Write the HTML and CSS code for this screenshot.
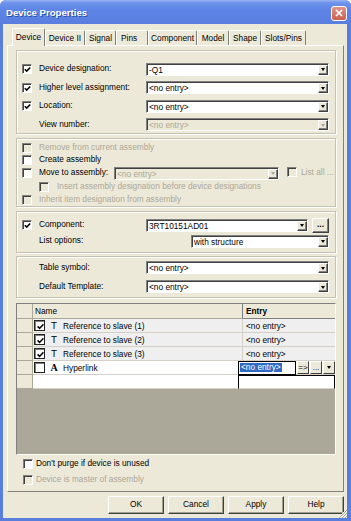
FILE: index.html
```html
<!DOCTYPE html>
<html lang="en">
<head>
    <meta charset="UTF-8">
    <meta name="viewport" content="width=device-width, initial-scale=1.0">
    <title>Device Properties</title>
    <link rel="stylesheet" href="styles.css">
</head>
<body>

    <div class="window">
        <div class="titlebar">
            <span class="title">Device Properties</span>
            <span class="close">
                <svg width="8" height="8" viewBox="0 0 8 8"><path d="M1 1L7 7M7 1L1 7" stroke="#fff" stroke-width="1.7"/></svg>
            </span>
        </div>

        <div class="client">
            <div class="tabs">
                <div class="tab active">Device</div>
                <div class="tab">Device II</div>
                <div class="tab">Signal</div>
                <div class="tab tab-pins">Pins</div>
                <div class="tab">Component</div>
                <div class="tab">Model</div>
                <div class="tab">Shape</div>
                <div class="tab">Slots/Pins</div>
            </div>

            <div class="panel">

                <div class="group g-desig">
                    <div class="row">
                        <span class="cb-cell"><span class="cb"><svg width="7" height="7" viewBox="0 0 7 7"><path d="M0.8 3.2L2.7 5.1L6.2 1.4" fill="none" stroke="#000" stroke-width="1.5"/></svg></span></span>
                        <span class="label">Device designation:</span>
                        <span class="combo"><span class="val">-Q1</span><span class="arrow"></span></span>
                    </div>
                    <div class="row">
                        <span class="cb-cell"><span class="cb"><svg width="7" height="7" viewBox="0 0 7 7"><path d="M0.8 3.2L2.7 5.1L6.2 1.4" fill="none" stroke="#000" stroke-width="1.5"/></svg></span></span>
                        <span class="label">Higher level assignment:</span>
                        <span class="combo"><span class="val">&lt;no entry&gt;</span><span class="arrow"></span></span>
                    </div>
                    <div class="row">
                        <span class="cb-cell"><span class="cb"><svg width="7" height="7" viewBox="0 0 7 7"><path d="M0.8 3.2L2.7 5.1L6.2 1.4" fill="none" stroke="#000" stroke-width="1.5"/></svg></span></span>
                        <span class="label">Location:</span>
                        <span class="combo"><span class="val">&lt;no entry&gt;</span><span class="arrow"></span></span>
                    </div>
                    <div class="row">
                        <span class="cb-cell"></span>
                        <span class="label">View number:</span>
                        <span class="combo disabled"><span class="val">&lt;no entry&gt;</span><span class="arrow"></span></span>
                    </div>
                </div>

                <div class="group g-assembly">
                    <div class="row r12 off">
                        <span class="cb-cell"><span class="cb"></span></span>
                        <span class="label">Remove from current assembly</span>
                    </div>
                    <div class="row r12">
                        <span class="cb-cell"><span class="cb"></span></span>
                        <span class="label">Create assembly</span>
                    </div>
                    <div class="row r14">
                        <span class="cb-cell"><span class="cb"></span></span>
                        <span class="label move-label">Move to assembly:</span>
                        <span class="combo disabled move-combo"><span class="val">&lt;no entry&gt;</span><span class="arrow"></span></span>
                        <span class="list-all off"><span class="cb"></span><span>List all ...</span></span>
                    </div>
                    <div class="row r14 off indent">
                        <span class="cb-cell"><span class="cb"></span></span>
                        <span class="label">Insert assembly designation before device designations</span>
                    </div>
                    <div class="row r12 off">
                        <span class="cb-cell"><span class="cb"></span></span>
                        <span class="label">Inherit item designation from assembly</span>
                    </div>
                </div>

                <div class="group g-comp">
                    <div class="row r16">
                        <span class="cb-cell"><span class="cb"><svg width="7" height="7" viewBox="0 0 7 7"><path d="M0.8 3.2L2.7 5.1L6.2 1.4" fill="none" stroke="#000" stroke-width="1.5"/></svg></span></span>
                        <span class="label">Component:</span>
                        <span class="combo comp-combo"><span class="val">3RT10151AD01</span><span class="arrow"></span></span>
                        <span class="btn-dots">...</span>
                    </div>
                    <div class="row r16">
                        <span class="cb-cell"></span>
                        <span class="label">List options:</span>
                        <span class="combo list-combo"><span class="val">with structure</span><span class="arrow"></span></span>
                    </div>
                </div>

                <div class="group g-table">
                    <div class="row r19">
                        <span class="cb-cell"></span>
                        <span class="label">Table symbol:</span>
                        <span class="combo"><span class="val">&lt;no entry&gt;</span><span class="arrow"></span></span>
                    </div>
                    <div class="row r19">
                        <span class="cb-cell"></span>
                        <span class="label">Default Template:</span>
                        <span class="combo"><span class="val">&lt;no entry&gt;</span><span class="arrow"></span></span>
                    </div>
                </div>

                <div class="grid">
                    <div class="grow head">
                        <span class="rh"></span>
                        <span class="name">Name</span>
                        <span class="entry">Entry</span>
                    </div>
                    <div class="grow">
                        <span class="rh"></span>
                        <span class="name"><span class="gcb"><svg width="7" height="7" viewBox="0 0 7 7"><path d="M0.6 3.4L2.6 5.4L6.4 1.2" fill="none" stroke="#000" stroke-width="1.5"/></svg></span><span class="ico">T</span>Reference to slave (1)</span>
                        <span class="entry">&lt;no entry&gt;</span>
                    </div>
                    <div class="grow">
                        <span class="rh"></span>
                        <span class="name"><span class="gcb"><svg width="7" height="7" viewBox="0 0 7 7"><path d="M0.6 3.4L2.6 5.4L6.4 1.2" fill="none" stroke="#000" stroke-width="1.5"/></svg></span><span class="ico">T</span>Reference to slave (2)</span>
                        <span class="entry">&lt;no entry&gt;</span>
                    </div>
                    <div class="grow">
                        <span class="rh"></span>
                        <span class="name"><span class="gcb"><svg width="7" height="7" viewBox="0 0 7 7"><path d="M0.6 3.4L2.6 5.4L6.4 1.2" fill="none" stroke="#000" stroke-width="1.5"/></svg></span><span class="ico">T</span>Reference to slave (3)</span>
                        <span class="entry">&lt;no entry&gt;</span>
                    </div>
                    <div class="grow white">
                        <span class="rh"></span>
                        <span class="name"><span class="gcb"></span><span class="ico bold">A</span>Hyperlink</span>
                        <span class="editor">
                            <span class="edit-box"><span class="sel">&lt;no entry&gt;</span></span>
                            <span class="ebtn">=&gt;</span>
                            <span class="ebtn">...</span>
                            <span class="ebtn"><span class="tri"></span></span>
                        </span>
                    </div>
                    <div class="grow white">
                        <span class="rh"></span>
                        <span class="name"></span>
                        <span class="drop-box"></span>
                    </div>
                </div>

                <div class="bottom-checks">
                    <div class="row r16">
                        <span class="cb-cell"><span class="cb"></span></span>
                        <span class="label">Don't purge if device is unused</span>
                    </div>
                    <div class="row r16 off">
                        <span class="cb-cell"><span class="cb"></span></span>
                        <span class="label">Device is master of assembly</span>
                    </div>
                </div>

            </div>

            <div class="buttons">
                <span class="button">OK</span>
                <span class="button">Cancel</span>
                <span class="button">Apply</span>
                <span class="button">Help</span>
            </div>

            <svg class="grip" width="10" height="10" viewBox="0 0 10 10">
                <path d="M9 2L2 9M9 5L5 9M9 8L8 9" stroke="#fff" stroke-width="1"/>
                <path d="M10 2L2 10M10 5L5 10M10 8L8 10" stroke="#aca899" stroke-width="1"/>
            </svg>
        </div>
    </div>

</body>
</html>
```

FILE: styles.css
```css
*{
    margin: 0;
    padding: 0;
    box-sizing: border-box;
}

body{
    font-family: "Liberation Sans", Arial, sans-serif;
    font-size: 8.3px;
    color: #000;
    background: #fff;
}

.window{
    width: 351px;
    height: 521px;
    background: #5a7edc;
    border-radius: 6px 6px 0 0;
    overflow: hidden;
    display: flex;
    flex-direction: column;
}

/* title bar */
.titlebar{
    height: 24px;
    display: flex;
    align-items: center;
    justify-content: space-between;
    padding: 0 4px 0 6px;
    background: linear-gradient(#9ab4f2 0, #6e92ea 3px, #5d84e6 10px, #5a80e2 20px, #5a7edc 24px);
}

.title{
    color: #fff;
    font-weight: bold;
    font-size: 9.6px;
    text-shadow: 1px 1px 0 #2c4fa8;
}

.close{
    width: 16px;
    height: 15px;
    margin-top: 2px;
    border: 1px solid #fff;
    border-radius: 3px;
    background: linear-gradient(#e0958a, #c9604d);
    display: flex;
    align-items: center;
    justify-content: center;
}

/* client area */
.client{
    flex: 1;
    margin: 0 4px 3px 3px;
    background: #ece9d8;
    padding-top: 4px;
    display: flex;
    flex-direction: column;
    position: relative;
}

.tabs{
    display: flex;
    align-items: flex-end;
    height: 17px;
    padding-left: 9px;
}

.tab{
    height: 15px;
    display: flex;
    align-items: center;
    justify-content: center;
    border-top: 1px solid #fff;
    border-left: 1px solid #fff;
    border-right: 1px solid #808080;
    border-radius: 2px 2px 0 0;
}

.tab.active{
    height: 18px;
    margin-bottom: -1px;
    padding-bottom: 2px;
    background: #ece9d8;
    position: relative;
    z-index: 1;
}

.tab:nth-child(1){ width: 33px; }
.tab:nth-child(2){ width: 40px; }
.tab:nth-child(3){ width: 31px; }
.tab:nth-child(4){ width: 32px; }
.tab:nth-child(5){ width: 49px; }
.tab:nth-child(6){ width: 32px; }
.tab:nth-child(7){ width: 32px; }
.tab:nth-child(8){ width: 45px; }

.tab-pins{
    justify-content: flex-start;
    padding-left: 4px;
}

.panel{
    margin-left: 4px;
    width: 337px;
    height: 447px;
    border: 1px solid;
    border-color: #fff #808080 #808080 #fff;
    padding: 4px 7px 0 8px;
    display: flex;
    flex-direction: column;
}

/* group boxes */
.group{
    border: 1px solid #c5c2b2;
    box-shadow: inset 1px 1px 0 #fff, 1px 1px 0 #fff;
    padding: 0 6px 0 5px;
}

.g-desig{
    height: 84px;
    padding-top: 9px;
}

.g-assembly{
    height: 69px;
    margin-top: 4px;
    padding-top: 3px;
}

.g-comp{
    height: 42px;
    margin-top: 4px;
    padding-top: 5px;
}

.g-table{
    height: 42px;
    margin-top: 3px;
    padding-top: 1px;
}

.row{
    display: flex;
    align-items: center;
    height: 18.5px;
    white-space: nowrap;
}

.r12{ height: 12px; }
.r14{ height: 14px; }
.r16{ height: 16px; }
.r19{ height: 19px; }

.cb-cell{
    width: 17px;
    flex-shrink: 0;
    display: flex;
}

.label{
    flex: 1;
    padding-bottom: 2px;
}

.off .label, .off{
    color: #aca899;
}

.indent{
    padding-left: 17px;
}

.indent .cb-cell{
    width: 18px;
}

/* checkbox */
.cb{
    width: 10px;
    height: 10px;
    border: 1px solid;
    border-color: #808080 #fff #fff #808080;
    box-shadow: inset 1px 1px 0 #404040;
    background: #fff;
    display: flex;
    align-items: center;
    justify-content: center;
    padding: 1px 0 0 1px;
}

.off .cb{
    background: #ece9d8;
}

/* combo box */
.combo{
    width: 183px;
    height: 13px;
    flex-shrink: 0;
    border: 1px solid;
    border-color: #808080 #fff #fff #808080;
    box-shadow: inset 1px 1px 0 #404040;
    background: #fff;
    display: flex;
    align-items: center;
    padding-left: 2px;
}

.combo .val{
    flex: 1;
    padding-top: 1px;
}

.combo .arrow{
    width: 10px;
    height: 10px;
    margin: 1px 0 0 0;
    background: #ece9d8;
    border: 1px solid;
    border-color: #fff #404040 #404040 #fff;
    box-shadow: inset -1px -1px 0 #808080;
    display: flex;
    align-items: center;
    justify-content: center;
}

.combo .arrow::after, .tri{
    content: "";
    border-left: 2.5px solid transparent;
    border-right: 2.5px solid transparent;
    border-top: 3px solid #000;
}

.combo.disabled{
    background: #ece9d8;
    color: #aca899;
}

.combo.disabled .arrow::after{
    border-top-color: #aca899;
}

.move-label{
    flex: none;
    width: 75px;
}

.move-combo{
    width: 165px;
}

.list-all{
    display: flex;
    align-items: center;
    gap: 4px;
    margin-left: 8px;
    padding-bottom: 2px;
}

.comp-combo{
    width: 162px;
}

.list-combo{
    width: 138px;
}

.btn-dots{
    width: 17px;
    height: 15px;
    margin-left: 4px;
    background: #ece9d8;
    border: 1px solid;
    border-color: #fff #404040 #404040 #fff;
    box-shadow: inset -1px -1px 0 #808080;
    display: flex;
    align-items: center;
    justify-content: center;
    font-weight: bold;
    padding-bottom: 3px;
}

/* property grid */
.grid{
    height: 152px;
    margin-top: 5px;
    border: 1px solid;
    border-color: #808080 #fff #fff #808080;
    background: #aca899;
}

.grow{
    display: flex;
    height: 14px;
    background: #efefef;
}

.grow.head{
    height: 15px;
    background: #ece9d8;
}

.grow.white{
    background: #fff;
}

.grow > span{
    display: flex;
    align-items: center;
    border-bottom: 1px solid #d4d0c8;
    white-space: nowrap;
}

.rh{
    width: 16px;
    background: #ece9d8;
    border-right: 1px solid #aca899;
}

.grow > .rh{
    border-bottom-color: #aca899;
}

.name{
    width: 210px;
    padding-left: 1px;
    border-right: 1px solid #d4d0c8;
}

.entry{
    width: 92px;
    padding-left: 3px;
}

.head .name{
    padding-left: 2px;
    border-right: 1px solid #808080;
    border-bottom-color: #aca899;
}

.head .entry{
    font-weight: bold;
    border-bottom-color: #808080;
}

.gcb{
    width: 11px;
    height: 11px;
    border: 1px solid #222;
    box-shadow: inset 1px 1px 0 #808080;
    background: #fff;
    display: flex;
    align-items: center;
    justify-content: center;
    padding: 1px 0 0 1px;
}

.ico{
    width: 18px;
    text-align: center;
    font-family: "DejaVu Sans", sans-serif;
    font-size: 9px;
}

.ico.bold{
    font-family: "Liberation Serif", serif;
    font-weight: bold;
    font-size: 10px;
}

.editor{
    width: 97px;
    margin-left: -5px;
    position: relative;
    gap: 1px;
    background: #fff;
}

.edit-box{
    width: 58px;
    height: 14px;
    border: 1px solid #000;
    display: flex;
    align-items: center;
    padding-left: 1px;
}

.sel{
    background: #316ac5;
    color: #fff;
    padding: 0 1px;
    line-height: 9px;
}

.ebtn{
    width: 12px;
    height: 13px;
    background: #ece9d8;
    border: 1px solid;
    border-color: #fff #404040 #404040 #fff;
    display: flex;
    align-items: center;
    justify-content: center;
    font-size: 8px;
}

.drop-box{
    width: 97px;
    margin-left: -5px;
    position: relative;
    border: 1px solid #000;
    background: #fff;
}

.bottom-checks{
    margin-top: 1px;
    padding-left: 7px;
}

.bottom-checks .cb-cell{
    width: 13px;
}

/* dialog buttons */
.buttons{
    display: flex;
    justify-content: flex-end;
    gap: 4px;
    margin-top: 4px;
    padding-right: 3px;
}

.button{
    width: 56px;
    height: 18px;
    background: #ece9d8;
    border: 1px solid;
    border-color: #fff #404040 #404040 #fff;
    box-shadow: inset -1px -1px 0 #a0a090;
    display: flex;
    align-items: center;
    justify-content: center;
    padding-bottom: 2px;
}

.grip{
    position: absolute;
    right: 0;
    bottom: 0;
}
```
